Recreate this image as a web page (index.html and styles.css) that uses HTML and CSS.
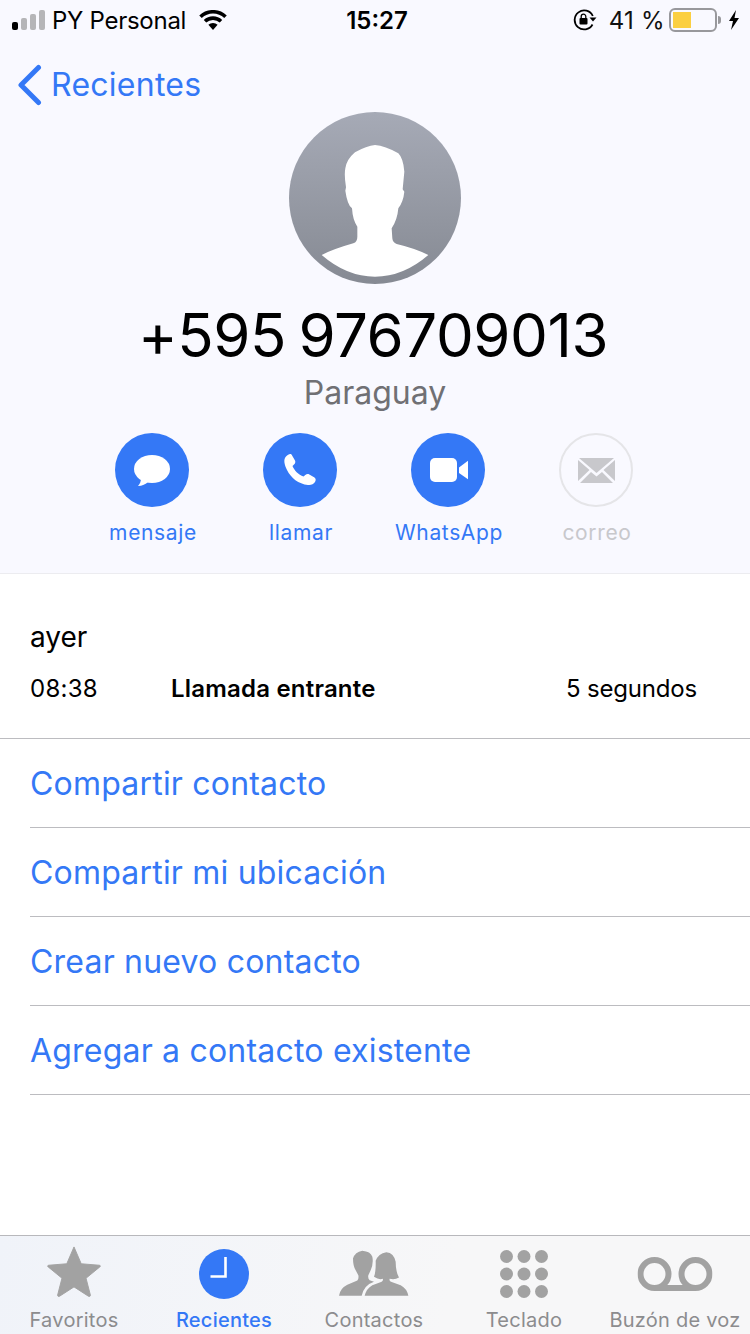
FILE: index.html
```html
<!DOCTYPE html>
<html lang="es">
<head>
<meta charset="utf-8">
<title>Recientes</title>
<link rel="stylesheet" href="styles.css">
</head>
<body>
<div class="page">
  <header class="top">
    <div class="status">
      <div class="st-left">
        <svg class="signal" width="34" height="20" viewBox="0 0 34 20"><rect x="0" y="12" width="6" height="8" rx="2" fill="#000"/><rect x="9" y="8" width="6" height="12" rx="2" fill="#b5b5b8"/><rect x="18" y="4" width="6" height="16" rx="2" fill="#b5b5b8"/><rect x="27" y="0" width="6" height="20" rx="2" fill="#b5b5b8"/></svg>
        <span class="carrier">PY Personal</span>
        <svg class="wifi" width="28" height="20" viewBox="0 0 28 20"><path d="M14 20l-4.600-5.200a6.500 6.500 0 0 1 9.200 0z" fill="#000"/><path d="M1.500 6.800a18 18 0 0 1 25 0M6 11.300a11.800 11.800 0 0 1 16 0" fill="none" stroke="#000" stroke-width="3.600"/></svg>
      </div>
      <span class="clock">15:27</span>
      <div class="st-right">
        <svg class="lock" width="24" height="22" viewBox="0 0 24 22"><path d="M19.500 15.500A9.500 9.500 0 1 1 19.800 7" fill="none" stroke="#000" stroke-width="1.800"/><path d="M16.500 8.500h7l-3.500 4z" fill="#000"/><rect x="6.500" y="9" width="8" height="6.500" rx="1" fill="#000"/><path d="M8.200 9.500V7.500a2.300 2.300 0 0 1 4.600 0v2" fill="none" stroke="#000" stroke-width="1.300"/></svg>
        <span class="pct">41 %</span>
        <div class="battery"><div class="charge"></div></div>
        <div class="nub"></div>
        <svg class="bolt" width="12" height="20" viewBox="0 0 12 20"><path d="M8 0L1 11h4l-2 9 8-12H6.500z" fill="#000"/></svg>
      </div>
    </div>
    <a class="back">
      <svg width="26" height="42" viewBox="0 0 26 42"><path d="M22.500 3.500L5 21l17.500 17.500" fill="none" stroke="#3478f6" stroke-width="5" stroke-linecap="round" stroke-linejoin="round"/></svg>
      <span>Recientes</span>
    </a>
    <div class="avatar">
      <svg width="172" height="172" viewBox="57 36 516 516"><path d="M155 465Q190 447 250 430Q262 426 262 410L262 380Q248 360 246 325Q232 315 226 272L228 262Q222 225 226 205Q230 178 255 157Q290 137 315 135Q345 137 385 160Q400 175 403 215L398 268L403 275Q400 305 385 325Q382 360 365 385L367 415Q368 428 380 432Q435 445 475 465Q400 530 315 530Q230 530 155 465Z" fill="#fff"/></svg>
    </div>
    <h1 class="number">+595 976709013</h1>
    <p class="country">Paraguay</p>
    <div class="actions">
      <div class="action">
        <div class="circle"><svg width="38" height="34" viewBox="0 0 38 34"><ellipse cx="19" cy="16" rx="18" ry="14" fill="#fff"/><path d="M8 25c0 3-1 6-3 8 4 0 8-2 10-4z" fill="#fff"/></svg></div>
        <span>mensaje</span>
      </div>
      <div class="action">
        <div class="circle"><svg width="34" height="34" viewBox="0 0 34 34"><path d="M3 3.500C5 1.500 7 .5 8.500 1.500l3.500 6c.7 1.500.2 3-1 4l-1.500 1.500c1.500 4 6 9 11 10.500l1.800-1.500c1.200-1 2.700-1.200 4-.5l5.200 3c1.500 1 1.500 3 .5 4.500-1.500 2-4 3.500-7 3C15.500 31 8 25 4 17 1.500 12 0 6.500 3 3.500z" fill="#fff"/></svg></div>
        <span>llamar</span>
      </div>
      <div class="action">
        <div class="circle"><svg width="40" height="26" viewBox="0 0 40 26"><rect x="2" y="1" width="27" height="24" rx="5" fill="#fff"/><path d="M31 10.500L40.500 3.500v19L31 16z" fill="#fff"/></svg></div>
        <span>WhatsApp</span>
      </div>
      <div class="action off">
        <div class="circle"><svg width="37" height="25" viewBox="0 0 37 25"><path d="M1 0h35L18.500 15z" fill="#c8c8cc"/><path d="M0 2l11.500 10L0 23zM37 2L25.500 12 37 23zM2 25l11-11 5.500 4.500L24 14l11 11z" fill="#c8c8cc"/></svg></div>
        <span>correo</span>
      </div>
    </div>
  </header>
  <main class="body">
    <section class="call">
      <div class="day">ayer</div>
      <div class="call-row">
        <span class="time">08:38</span>
        <span class="kind">Llamada entrante</span>
        <span class="dur">5 segundos</span>
      </div>
    </section>
    <ul class="links">
      <li>Compartir contacto</li>
      <li>Compartir mi ubicación</li>
      <li>Crear nuevo contacto</li>
      <li>Agregar a contacto existente</li>
    </ul>
  </main>
  <nav class="tabs">
    <div class="tab">
      <svg width="54" height="52" viewBox="0 0 56 54"><path d="M28 2l7.500 17.500 18.500 1.500a1 1 0 0 1 .5 2L40.500 34.500 45 52c.2 1.200-.8 1.800-2 1.200L28 43.500 13 53.200c-1.200.6-2.200 0-2-1.200l4.500-17.500L1.500 23a1 1 0 0 1 .5-2l18.500-1.500z" fill="#a2a2a2" stroke="#a2a2a2" stroke-linejoin="round"/></svg>
      <span>Favoritos</span>
    </div>
    <div class="tab active">
      <svg width="50" height="50" viewBox="0 0 50 50"><circle cx="25" cy="25" r="25" fill="#3478f6"/><path d="M26.500 8V27.500H11.500" fill="none" stroke="#fff" stroke-width="2.600"/></svg>
      <span>Recientes</span>
    </div>
    <div class="tab">
      <svg width="70" height="47" viewBox="30 30 210 140"><path d="M30 167Q33 145 55 134L85 121Q90 115 88 105L80 90Q72 78 72 55Q78 36 100 32Q125 34 130 50Q134 70 125 90L118 105Q116 115 122 120L135 125Q105 135 98 167Z" fill="#a2a2a2"/><path d="M107 167Q112 145 130 135L158 125Q164 120 161 116Q150 120 135 110Q141 95 140 62Q148 40 172 36Q195 38 200 65Q200 95 210 112Q198 120 182 116Q180 122 186 125L215 135Q234 145 238 167Z" fill="#a2a2a2"/></svg>
      <span>Contactos</span>
    </div>
    <div class="tab">
      <svg width="48" height="48" viewBox="0 0 48 48"><g fill="#a2a2a2"><circle cx="6.500" cy="6.500" r="6.500"/><circle cx="24" cy="6.500" r="6.500"/><circle cx="41.500" cy="6.500" r="6.500"/><circle cx="6.500" cy="24" r="6.500"/><circle cx="24" cy="24" r="6.500"/><circle cx="41.500" cy="24" r="6.500"/><circle cx="6.500" cy="41.500" r="6.500"/><circle cx="24" cy="41.500" r="6.500"/><circle cx="41.500" cy="41.500" r="6.500"/></g></svg>
      <span>Teclado</span>
    </div>
    <div class="tab">
      <svg width="75" height="34" viewBox="0 0 75 34"><g fill="none" stroke="#a2a2a2" stroke-width="6"><circle cx="17" cy="17" r="14"/><circle cx="58" cy="17" r="14"/><path d="M17 31H58"/></g></svg>
      <span>Buzón de voz</span>
    </div>
  </nav>
</div>
</body>
</html>
```

FILE: styles.css
```css
* { box-sizing: border-box; }
html, body { margin: 0; padding: 0; }
body { font-family: Inter, "Liberation Sans", sans-serif; background: #fff; }
.page { width: 750px; height: 1334px; display: flex; flex-direction: column; overflow: hidden; }

.top { height: 574px; background: #f9f9ff; border-bottom: 1px solid #ececf0; display: flex; flex-direction: column; align-items: center; }
.status { width: 100%; height: 40px; display: flex; align-items: center; justify-content: space-between; padding: 0 10px 0 12px; }
.st-left, .st-right { display: flex; align-items: center; }
.st-left { width: 290px; }
.st-right { width: 290px; justify-content: flex-end; }
.carrier { font-size: 24px; margin-left: 6px; color: #000; letter-spacing: -.27px; }
.wifi { margin-left: 13px; }
.clock { font-size: 24px; font-weight: 600; color: #000; margin-left: 2px; }
.lock { margin-right: 12px; }
.pct { font-size: 24px; color: #111; margin-right: 4px; letter-spacing: .3px; }
.battery { width: 48px; height: 24px; border: 2px solid #98989c; border-radius: 6px; padding: 2px; }
.charge { width: 18px; height: 16px; background: #fbcf41; }
.nub { width: 3px; height: 8px; background: #98989c; border-radius: 0 3px 3px 0; margin-left: 1px; margin-right: 7px; }
.back { align-self: flex-start; height: 62px; padding: 27px 0 0 16px; display: flex; align-items: center; gap: 9px; font-size: 32px; letter-spacing: .25px; color: #3478f6; }
.avatar { width: 172px; height: 172px; margin-top: 10px; border-radius: 50%; background: linear-gradient(#a6aab6, #868a93); overflow: hidden; flex: none; }
.avatar svg { display: block; }
.number { margin: 17px 4px 0 0; font-size: 60px; line-height: 68px; font-weight: 400; color: #000; letter-spacing: -.45px; word-spacing: -4px; }
.country { margin: 4px 0 0; font-size: 32px; line-height: 40px; color: #707074; }
.actions { display: flex; justify-content: center; margin: 20px 2px 0 0; }
.action { width: 148px; display: flex; flex-direction: column; align-items: center; font-size: 21px; letter-spacing: .65px; color: #3478f6; }
.action span { margin-left: 2px; }
.circle { width: 74px; height: 74px; border-radius: 50%; background: #3478f6; display: flex; align-items: center; justify-content: center; margin-bottom: 13px; }
.off { color: #c8c8cc; }
.off .circle { background: none; border: 2px solid #e5e5e8; }

.body { flex: 1; background: #fff; }
.call { height: 165px; border-bottom: 1px solid #bcbcc0; padding: 45px 30px 0; }
.day { font-size: 28px; line-height: 36px; color: #000; }
.call-row { display: flex; margin-top: 19px; font-size: 24px; line-height: 30px; color: #000; }
.time { width: 141px; letter-spacing: .25px; }
.kind { width: 395px; font-weight: 600; letter-spacing: .2px; }
.dur { letter-spacing: -.2px; }
.links { list-style: none; margin: 0; padding: 0 0 0 30px; }
.links li { height: 89px; border-bottom: 1px solid #bcbcc0; display: flex; align-items: center; font-size: 32px; letter-spacing: .2px; color: #3478f6; }

.tabs { height: 99px; background: linear-gradient(100deg, #f0f3f9, #f7f7f8 60%); border-top: 1px solid #b8b8bc; display: flex; }
.tab { width: 150px; margin-left: -1px; margin-right: 1px; display: flex; flex-direction: column; align-items: center; justify-content: flex-end; font-size: 20px; letter-spacing: .25px; color: #8c8c8e; padding-bottom: 2px; position: relative; }
.tab:last-child { margin-left: 0; margin-right: 0; }
.tab svg { position: absolute; left: 50%; transform: translateX(-50%); }
.tab:nth-child(1) svg { top: 9px; }
.tab:nth-child(2) svg { top: 13px; }
.tab:nth-child(3) svg { top: 14px; }
.tab:nth-child(4) svg { top: 14px; }
.tab:nth-child(5) svg { top: 21px; }
.active { color: #3478f6; font-weight: 500; }
```
